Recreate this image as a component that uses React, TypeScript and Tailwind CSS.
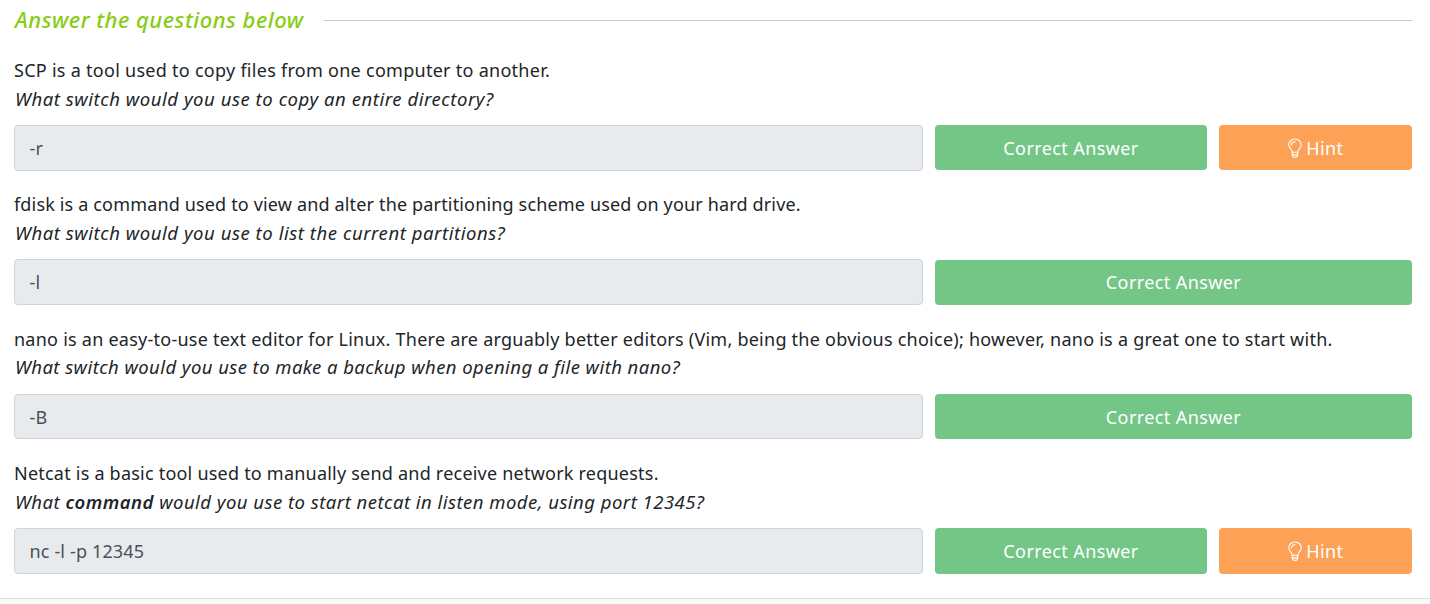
import React from "react";

type Question = {
  statement: string;
  statementClass: string;
  prompt: React.ReactNode;
  promptClass: string;
  answer: string;
  hint?: boolean;
};

const questions: Question[] = [
  {
    statement: "SCP is a tool used to copy files from one computer to another.",
    statementClass: "tracking-[0.275px]",
    prompt: "What switch would you use to copy an entire directory?",
    promptClass: "tracking-[0.55px]",
    answer: "-r",
    hint: true,
  },
  {
    statement: "fdisk is a command used to view and alter the partitioning scheme used on your hard drive.",
    statementClass: "tracking-[0.16px]",
    prompt: "What switch would you use to list the current partitions?",
    promptClass: "tracking-[0.55px]",
    answer: "-l",
  },
  {
    statement:
      "nano is an easy-to-use text editor for Linux. There are arguably better editors (Vim, being the obvious choice); however, nano is a great one to start with.",
    statementClass: "tracking-[0.245px]",
    prompt: "What switch would you use to make a backup when opening a file with nano?",
    promptClass: "tracking-[0.435px]",
    answer: "-B",
  },
  {
    statement: "Netcat is a basic tool used to manually send and receive network requests.",
    statementClass: "tracking-[0.22px]",
    prompt: (
      <>
        What <strong className="font-semibold">command</strong> would you use to start netcat in listen mode, using port 12345?
      </>
    ),
    promptClass: "tracking-[0.475px]",
    answer: "nc -l -p 12345",
    hint: true,
  },
];

function Bulb() {
  return (
    <svg
      className="-mt-px h-[20px] w-[14px] shrink-0"
      viewBox="0 0 14 20"
      fill="none"
      stroke="currentColor"
      strokeWidth="1.15"
      strokeLinecap="round"
      strokeLinejoin="round"
    >
      <path d="M4.3 14.2c0-3-3.6-4.3-3.6-7.2a6.3 6 0 0 1 12.6 0c0 2.9-3.6 4.2-3.6 7.2z" />
      <path d="M3.5 7A3.6 3.4 0 0 1 7 3.7" />
      <path d="M4.3 14.2v3.3l1.1 1.7h3.2l1.1-1.7v-3.3M4.5 16.8h5" />
    </svg>
  );
}

function QuestionBlock({ statement, statementClass, prompt, promptClass, answer, hint }: Question) {
  return (
    <section className="mb-[19.2px]">
      <div className="mb-[11.5px] pt-[0.5px] text-[18px] leading-[28.8px] whitespace-nowrap text-[#212529]">
        <p className={statementClass}>{statement}</p>
        <p className="pl-px text-[18.5px] italic"><span className={promptClass}>{prompt}</span></p>
      </div>
      <div className="flex h-[45.6px] gap-3 text-[18px]">
        <div className="flex w-[909px] items-center rounded-[4px] border border-[#ced4da] bg-[#e8ebee] px-[14.5px] pt-px tracking-[0.15px] text-[#495057]">
          {answer}
        </div>
        <button className="mt-[0.2px] h-[45.25px] flex-1 rounded-[4px] bg-[#74c687] pt-[1.4px] tracking-[0.4px] text-white">
          Correct Answer
        </button>
        {hint && (
          <button className="mt-[0.2px] flex h-[45.25px] w-[193px] items-center justify-center gap-[4.5px] rounded-[4px] bg-[#fca156] pt-[1.4px] tracking-[0.4px] text-white">
            <Bulb />
            Hint
          </button>
        )}
      </div>
    </section>
  );
}

export default function App() {
  return (
    <div className="flex h-[604px] flex-col overflow-hidden bg-white font-['Noto_Sans','Open_Sans',sans-serif]">
      <main className="h-[598px] shrink-0 pr-[18px] pl-[14px]">
        <header className="flex h-[41px] items-center gap-5 pb-px">
          <h1 className="w-[290px] pb-[2px] pl-px text-[22px] font-medium tracking-[0.5px] whitespace-nowrap text-[#88cc14] italic">
            Answer the questions below
          </h1>
          <div className="h-px flex-1 bg-[#c8cac8]" />
        </header>
        <div className="pt-[14.4px]">
          {questions.map((question) => (
            <QuestionBlock key={question.answer} {...question} />
          ))}
        </div>
      </main>
      <footer className="flex-1 border-t border-[#dee0e2] bg-[#fafafa]" />
    </div>
  );
}
